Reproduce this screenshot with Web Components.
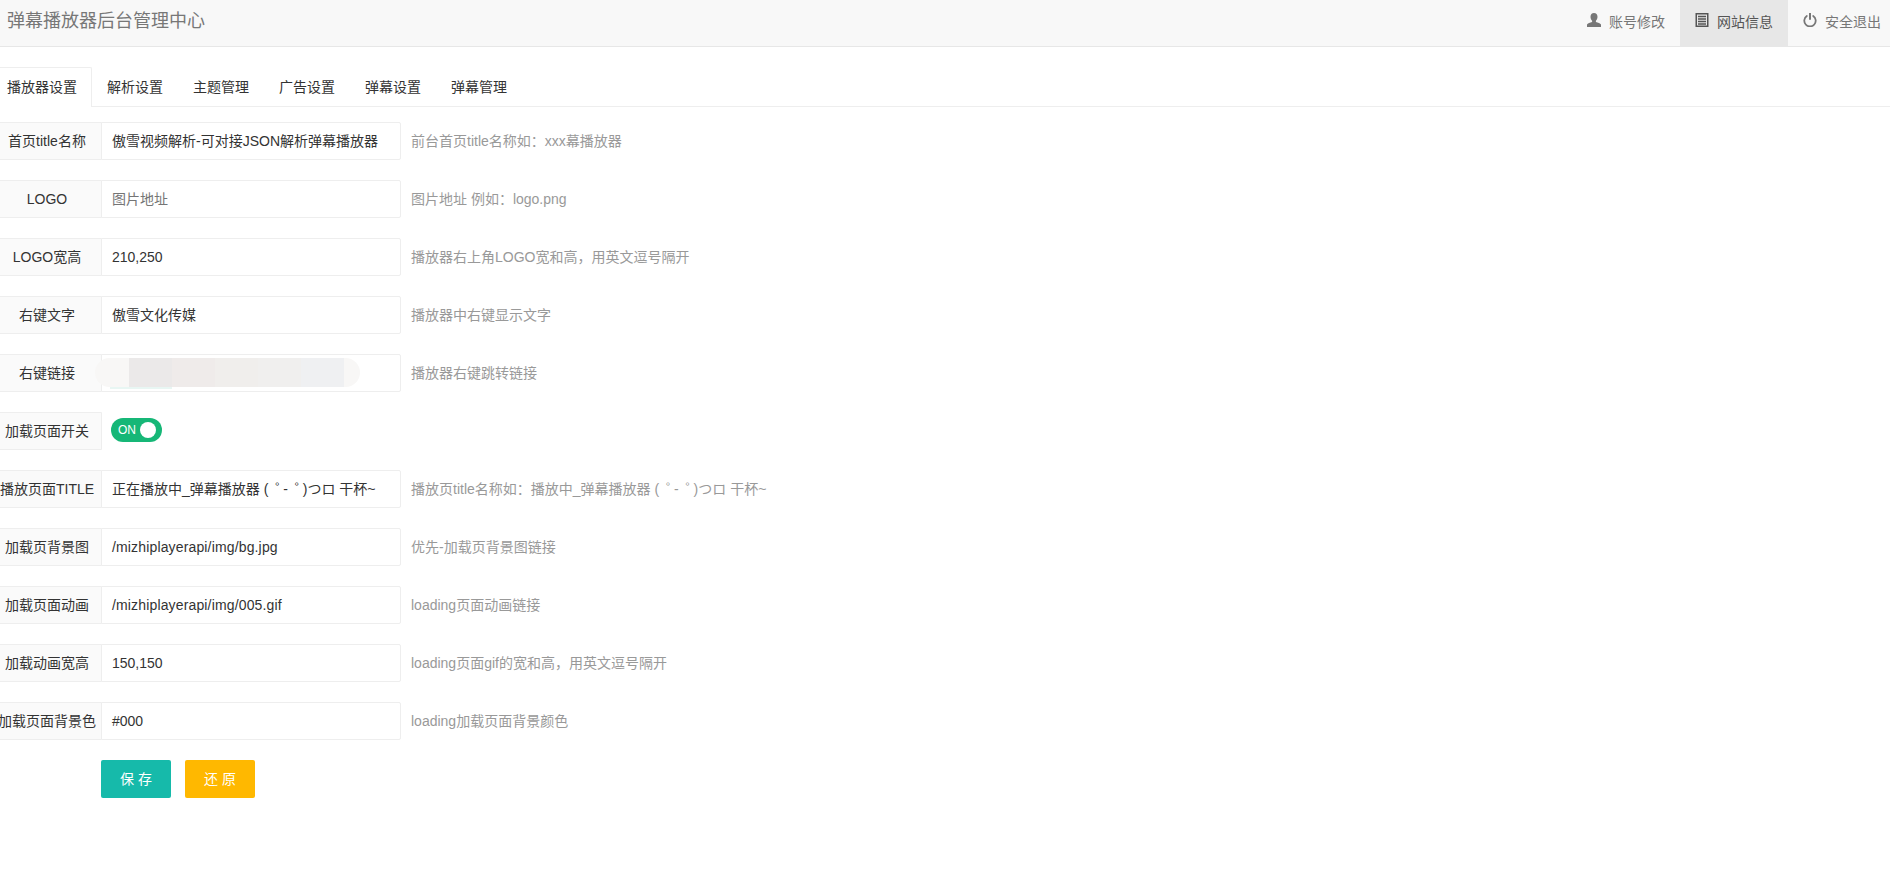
<!DOCTYPE html>
<html lang="zh">
<head>
<meta charset="utf-8">
<title>弹幕播放器后台管理中心</title>
<style>
  html, body {
    margin: 0;
    height: 100%;
    overflow: hidden;
    background: #fff;
  }
  body {
    font: 14px/1.5 "Liberation Sans", "Noto Sans CJK SC", sans-serif;
    color: #333;
  }
</style>
</head>
<body>
<admin-header title="弹幕播放器后台管理中心">
  <nav-item icon="user" label="账号修改"></nav-item>
  <nav-item icon="list" label="网站信息" active></nav-item>
  <nav-item icon="off" label="安全退出"></nav-item>
</admin-header>

<tab-bar>
  <tab-item active>播放器设置</tab-item>
  <tab-item>解析设置</tab-item>
  <tab-item>主题管理</tab-item>
  <tab-item>广告设置</tab-item>
  <tab-item>弹幕设置</tab-item>
  <tab-item>弹幕管理</tab-item>
</tab-bar>

<settings-form>
  <form-row label="首页title名称" value="傲雪视频解析-可对接JSON解析弹幕播放器" hint="前台首页title名称如：xxx幕播放器"></form-row>
  <form-row label="LOGO" placeholder="图片地址" hint="图片地址 例如：logo.png"></form-row>
  <form-row label="LOGO宽高" value="210,250" hint="播放器右上角LOGO宽和高，用英文逗号隔开"></form-row>
  <form-row label="右键文字" value="傲雪文化传媒" hint="播放器中右键显示文字"></form-row>
  <form-row label="右键链接" hint="播放器右键跳转链接"><blur-patch></blur-patch></form-row>
  <form-row label="加载页面开关" bare><on-switch></on-switch></form-row>
  <form-row label="播放页面TITLE" value="正在播放中_弹幕播放器 ( ゜- ゜)つロ 干杯~" hint="播放页title名称如：播放中_弹幕播放器 ( ゜- ゜)つロ 干杯~"></form-row>
  <form-row label="加载页背景图" value="/mizhiplayerapi/img/bg.jpg" wide hint="优先-加载页背景图链接"></form-row>
  <form-row label="加载页面动画" value="/mizhiplayerapi/img/005.gif" wide hint="loading页面动画链接"></form-row>
  <form-row label="加载动画宽高" value="150,150" hint="loading页面gif的宽和高，用英文逗号隔开"></form-row>
  <form-row label="加载页面背景色" value="#000" hint="loading加载页面背景颜色"></form-row>
  <form-actions>
    <action-button color="#16baaa">保 存</action-button>
    <action-button color="#ffb800">还 原</action-button>
  </form-actions>
</settings-form>

<script>
// <admin-header>
class AdminHeader extends HTMLElement {
  constructor() {
    super();
    this.attachShadow({mode: 'open'});
  }

  connectedCallback() {
    this.shadowRoot.innerHTML = `
      <style>
        :host {
          display: flex;
          justify-content: space-between;
          height: 46px;
          background: #f8f8f8;
          border-bottom: 1px solid #e7e7e7;
        }
        .brand {
          padding: 7px 0 0 7px;
          font-size: 18px;
          line-height: 28px;
          color: #777;
        }
        nav {
          display: flex;
          margin-right: -6px;
        }
      </style>
      <div class="brand">${this.getAttribute('title')}</div>
      <nav><slot></slot></nav>
    `;
  }
}
customElements.define('admin-header', AdminHeader);

// <nav-item>
const NAV_ICONS = {
  user: '<path fill="currentColor" d="M7 0c2.200 0 3.500 1.600 3.500 3.800 0 1.600-.7 3-1.600 3.900v1.200c2 .7 4.500 1.400 5.100 2.600V14H0v-2.500c.6-1.200 3.100-1.900 5.100-2.600V7.700C4.200 6.800 3.500 5.400 3.500 3.800 3.500 1.600 4.800 0 7 0z"/>',
  list: '<path fill="currentColor" fill-rule="evenodd" d="M.5 0h13v14H.5zM2 1.500v11h10v-11z"/><path fill="currentColor" d="M3 2.700h8v1.500H3zM3 5.200h8v1.500H3zM3 7.700h8v1.500H3zM3 10.200h8v1.500H3z"/>',
  off: '<path fill="none" stroke="currentColor" stroke-width="1.800" stroke-linecap="round" d="M3.800 3a5.700 5.700 0 1 0 6.400 0"/><path fill="none" stroke="currentColor" stroke-width="2" d="M7 0v6.800"/>'
};

class NavItem extends HTMLElement {
  constructor() {
    super();
    this.attachShadow({mode: 'open'});
  }

  connectedCallback() {
    this.shadowRoot.innerHTML = `
      <style>
        :host {
          display: flex;
          align-items: center;
          gap: 8px;
          height: 46px;
          box-sizing: border-box;
          padding: 0 15px 2px;
          color: #777;
        }
        :host([active]) {
          background: #e7e7e7;
          color: #555;
        }
        svg {
          width: 14px;
          height: 14px;
          flex: none;
          margin-top: -4px;
        }
      </style>
      <svg viewBox="0 0 14 14">${NAV_ICONS[this.getAttribute('icon')]}</svg>
      <span>${this.getAttribute('label')}</span>
    `;
  }
}
customElements.define('nav-item', NavItem);

// <tab-bar>
class TabBar extends HTMLElement {
  constructor() {
    super();
    this.attachShadow({mode: 'open'});
  }

  connectedCallback() {
    this.shadowRoot.innerHTML = `
      <style>
        :host {
          display: flex;
          height: 39px;
          margin-top: 20px;
          border-bottom: 1px solid #eee;
        }
        div {
          display: flex;
          margin-left: -8px;
        }
      </style>
      <div><slot></slot></div>
    `;
  }
}
customElements.define('tab-bar', TabBar);

// <tab-item>
class TabItem extends HTMLElement {
  constructor() {
    super();
    this.attachShadow({mode: 'open'});
  }

  connectedCallback() {
    this.shadowRoot.innerHTML = `
      <style>
        :host {
          display: block;
          height: 40px;
          padding: 0 15px;
          line-height: 40px;
          color: #333;
          box-sizing: border-box;
        }
        :host([active]) {
          padding: 0 14px;
          background: #fff;
          border: 1px solid #eee;
          border-bottom: 0;
          border-radius: 2px 2px 0 0;
          line-height: 38px;
        }
      </style>
      <slot></slot>
    `;
  }
}
customElements.define('tab-item', TabItem);

// <settings-form>
class SettingsForm extends HTMLElement {
  constructor() {
    super();
    this.attachShadow({mode: 'open'});
  }

  connectedCallback() {
    this.shadowRoot.innerHTML = `
      <style>
        :host {
          display: flex;
          flex-direction: column;
          gap: 20px;
          margin: 15px 0 0 -8px;
        }
      </style>
      <slot></slot>
    `;
  }
}
customElements.define('settings-form', SettingsForm);

// <form-row>
class FormRow extends HTMLElement {
  constructor() {
    super();
    this.attachShadow({mode: 'open'});
  }

  // the kana dakuten sits left in its cell here, the reference has it tight and further right
  tightMarks(text) {
    return text.replace(/゜/g, '<span class="mark">゜</span>');
  }

  connectedCallback() {
    const value = this.getAttribute('value');
    const placeholder = this.getAttribute('placeholder');
    const hint = this.getAttribute('hint');
    const bare = this.hasAttribute('bare');
    const classes = ['field'];

    if(!value) {
      classes.push('empty');
    }
    if(this.hasAttribute('wide')) {
      classes.push('wide');
    }

    const body = bare
      ? `<div class="bare"><slot></slot></div>`
      : `<div class="${classes.join(' ')}">${this.tightMarks(value || placeholder || '')}<slot></slot></div>`;

    this.shadowRoot.innerHTML = `
      <style>
        :host {
          display: flex;
          height: 38px;
        }
        .label {
          flex: none;
          width: 110px;
          box-sizing: border-box;
          display: flex;
          align-items: center;
          justify-content: center;
          white-space: nowrap;
          background: #fafafa;
          border: 1px solid #eee;
          border-radius: 2px 0 0 2px;
          color: #333;
        }
        .field {
          position: relative;
          flex: none;
          width: 300px;
          box-sizing: border-box;
          margin-left: -1px;
          padding-left: 10px;
          line-height: 36px;
          white-space: nowrap;
          background: #fff;
          border: 1px solid #eee;
          border-radius: 0 2px 2px 0;
          color: #333;
        }
        .empty {
          color: #757575;
        }
        .wide {
          letter-spacing: .15px;
        }
        .mark {
          margin-left: 3px;
          letter-spacing: -6px;
        }
        .bare {
          display: flex;
          align-items: center;
          padding-left: 9px;
          margin-top: -2px;
        }
        .hint {
          padding-left: 10px;
          line-height: 38px;
          white-space: nowrap;
          color: #999;
        }
      </style>
      <div class="label">${this.getAttribute('label')}</div>
      ${body}
      ${hint ? `<div class="hint">${this.tightMarks(hint)}</div>` : ''}
    `;
  }
}
customElements.define('form-row', FormRow);

// <blur-patch> the smudged-out value over the link field
class BlurPatch extends HTMLElement {
  constructor() {
    super();
    this.attachShadow({mode: 'open'});
  }

  connectedCallback() {
    this.shadowRoot.innerHTML = `
      <style>
        :host {
          position: absolute;
          left: -7px;
          top: 3px;
          width: 265px;
          height: 29px;
          display: block;
        }
        .pill {
          position: absolute;
          inset: 0;
          background: #f8f7f6;
          border-radius: 15px;
        }
        .bars {
          position: absolute;
          left: 34px;
          top: 0;
          bottom: 0;
          width: 215px;
          display: flex;
        }
        .bars i {
          flex: 1;
        }
        .tint {
          position: absolute;
          left: 15px;
          top: 29px;
          width: 62px;
          height: 2px;
          background: #e8f6f3;
        }
      </style>
      <div class="tint"></div>
      <div class="pill"></div>
      <div class="bars">
        <i style="background:#ebe9e9"></i>
        <i style="background:#efebea"></i>
        <i style="background:#f0eeec"></i>
        <i style="background:#f0efee"></i>
        <i style="background:#eff0f2"></i>
      </div>
    `;
  }
}
customElements.define('blur-patch', BlurPatch);

// <on-switch>
class OnSwitch extends HTMLElement {
  constructor() {
    super();
    this.attachShadow({mode: 'open'});
  }

  connectedCallback() {
    this.shadowRoot.innerHTML = `
      <style>
        :host {
          display: flex;
          align-items: center;
          justify-content: space-between;
          width: 51px;
          height: 24px;
          box-sizing: border-box;
          padding: 0 6px 0 7px;
          background: #16b777;
          border-radius: 12px;
          color: #fff;
          font-size: 12px;
        }
        i {
          width: 16px;
          height: 16px;
          background: #fff;
          border-radius: 50%;
        }
      </style>
      <span>ON</span><i></i>
    `;
  }
}
customElements.define('on-switch', OnSwitch);

// <form-actions>
class FormActions extends HTMLElement {
  constructor() {
    super();
    this.attachShadow({mode: 'open'});
  }

  connectedCallback() {
    this.shadowRoot.innerHTML = `
      <style>
        :host {
          display: flex;
          gap: 14px;
          padding-left: 109px;
        }
      </style>
      <slot></slot>
    `;
  }
}
customElements.define('form-actions', FormActions);

// <action-button>
class ActionButton extends HTMLElement {
  constructor() {
    super();
    this.attachShadow({mode: 'open'});
  }

  connectedCallback() {
    this.shadowRoot.innerHTML = `
      <style>
        :host {
          display: block;
          width: 70px;
          height: 38px;
          line-height: 38px;
          text-align: center;
          color: #fff;
          border-radius: 2px;
          background: ${this.getAttribute('color')};
        }
      </style>
      <slot></slot>
    `;
  }
}
customElements.define('action-button', ActionButton);
</script>
</body>
</html>
